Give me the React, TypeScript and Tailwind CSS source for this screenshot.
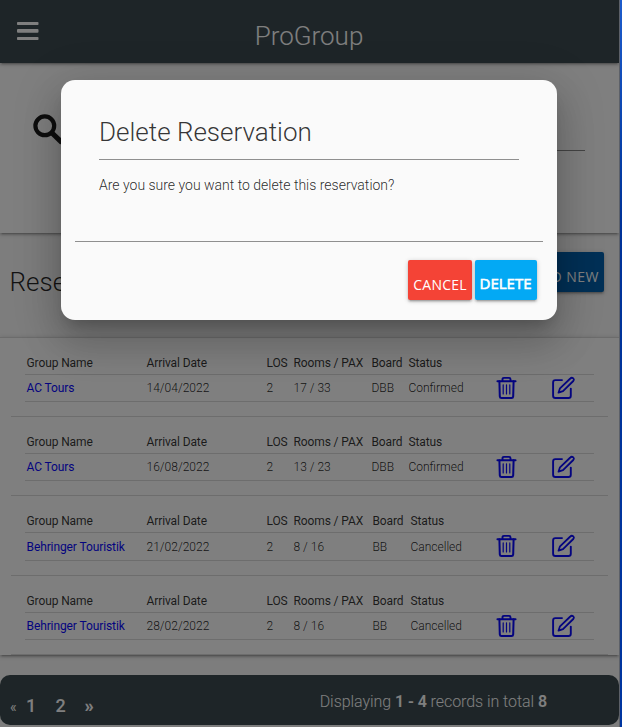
type Reservation = {
  name: string;
  date: string;
  los: string;
  rooms: string;
  board: string;
  status: string;
  cols: string;
  rowHeight: string;
};

const wide = "grid-cols-[120px_120px_27px_78px_37px_86.5px_1fr]";
const narrow = "grid-cols-[120px_120px_27px_79px_38px_84.5px_1fr]";

const reservations: Reservation[] = [
  { name: "AC Tours", date: "14/04/2022", los: "2", rooms: "17 / 33", board: "DBB", status: "Confirmed", cols: wide, rowHeight: "h-[27px]" },
  { name: "AC Tours", date: "16/08/2022", los: "2", rooms: "13 / 23", board: "DBB", status: "Confirmed", cols: wide, rowHeight: "h-[27px]" },
  { name: "Behringer Touristik", date: "21/02/2022", los: "2", rooms: "8 / 16", board: "BB", status: "Cancelled", cols: narrow, rowHeight: "h-[28px]" },
  { name: "Behringer Touristik", date: "28/02/2022", los: "2", rooms: "8 / 16", board: "BB", status: "Cancelled", cols: narrow, rowHeight: "h-[27px]" },
];

const depth = "shadow-[0_2px_2px_0_rgba(0,0,0,0.14),0_3px_1px_-2px_rgba(0,0,0,0.12),0_1px_5px_0_rgba(0,0,0,0.2)]";

function MenuIcon() {
  return (
    <svg className="mt-[19px] ml-[16px]" width="24" height="24" viewBox="0 0 24 24" fill="currentColor">
      <rect x="1" y="3" width="21.5" height="3" rx="0.8" />
      <rect x="1" y="10.1" width="21.5" height="3.6" rx="1" />
      <rect x="1" y="18" width="21.5" height="3" rx="0.8" />
    </svg>
  );
}

function SearchIcon() {
  return (
    <svg className="mt-[46px]" width="42" height="42" viewBox="0 0 42 42" fill="none" stroke="#1c1c1c">
      <circle cx="16.8" cy="16.8" r="9.4" strokeWidth="4.2" />
      <path d="M23.5 23.5 34 33.6" strokeWidth="5.2" />
    </svg>
  );
}

function TrashIcon() {
  return (
    <svg width="24" height="24" viewBox="0 0 24 24" fill="none" stroke="currentColor" strokeLinecap="round" strokeLinejoin="round">
      <path d="M2.4 5.2H20.6" strokeWidth="1.9" />
      <path d="M4.4 5.2 4.8 20.4Q4.9 22 6.5 22H16.5Q18.1 22 18.2 20.4L18.6 5.2" strokeWidth="2" />
      <path d="M7.5 5V3.3Q7.5 1.9 8.9 1.9H14.1Q15.5 1.9 15.5 3.3V5" strokeWidth="1.9" />
      <path d="M8.2 8.8V18M11.5 8.8V18M14.8 8.8V18" strokeWidth="1.2" />
    </svg>
  );
}

function EditIcon() {
  return (
    <svg width="24" height="24" viewBox="0 0 24 24" fill="none" stroke="currentColor" strokeLinecap="round" strokeLinejoin="round">
      <path d="M11 4.1H4.4Q2.1 4.1 2.1 6.4V19.7Q2.1 22 4.4 22H17.5Q19.8 22 19.8 19.7V12.6" strokeWidth="1.9" />
      <path d="M19.3 2.5Q20.5 1.3 22 2.1Q23.6 3.3 22.3 5L12 15.2 7.5 16.7 9 12.3Z" strokeWidth="1.8" />
    </svg>
  );
}

function Entry({ r }: { r: Reservation }) {
  return (
    <li className="border-b border-[#dadada] px-[14px] py-[14px]">
      <div className={`grid h-[23px] items-center border-b border-[#dadada] pl-[1.5px] text-[12px] tracking-[-0.11px] whitespace-nowrap text-black/80 ${r.cols}`}>
        <span>Group Name</span>
        <span>Arrival Date</span>
        <span>LOS</span>
        <span>Rooms / PAX</span>
        <span>Board</span>
        <span>Status</span>
      </div>
      <div className={`grid items-center border-b border-[#dadada] pl-[1.5px] text-[12px] font-light whitespace-nowrap text-black/85 ${r.cols} ${r.rowHeight}`}>
        <a className="font-normal tracking-[-0.1px] text-[#0808ff]">{r.name}</a>
        <span>{r.date}</span>
        <span>{r.los}</span>
        <span>{r.rooms}</span>
        <span>{r.board}</span>
        <span>{r.status}</span>
        <span className="-mt-px flex gap-8 text-[#0808ff]">
          <TrashIcon />
          <EditIcon />
        </span>
      </div>
    </li>
  );
}

export default function App() {
  return (
    <div className="relative flex h-[727px] w-[622px] overflow-hidden bg-[#fafafa] font-[Roboto,sans-serif] text-black">
      <div className="flex w-[619px] flex-col">
        <header className={`relative grid h-[63px] shrink-0 grid-cols-[1fr_auto_1fr] bg-[#3c4b50] text-white ${depth}`}>
          <MenuIcon />
          <h1 className="mt-[17px] -ml-px text-[26px] leading-[38px] font-light">ProGroup</h1>
          <span />
        </header>

        <section className={`flex h-[170px] shrink-0 justify-between bg-white pr-[34px] pl-[28px] ${depth}`}>
          <SearchIcon />
          <div className="mt-[87px] h-px w-[480px] bg-[#8a8a8a]" />
        </section>

        <section className="flex h-[104px] shrink-0 justify-between pr-[15px] pl-[9.5px]">
          <h2 className="mt-[30px] text-[26px] leading-[38px] font-light text-black/85">Reservations</h2>
          <button className={`mt-[19px] h-[40px] w-[92px] rounded-[2px] bg-[#0260ad] pt-[8px] pr-[5px] text-right font-['Open_Sans',sans-serif] text-[14px] tracking-[0.5px] whitespace-nowrap text-white ${depth}`}>
            ADD NEW
          </button>
        </section>

        <ul className={`shrink-0 border-t border-[#d8d8d8] bg-white px-[11px] ${depth}`}>
          {reservations.map((r) => (
            <Entry key={r.date} r={r} />
          ))}
        </ul>

        <footer className="mt-[20px] flex h-[50px] shrink-0 justify-between rounded-[10px] bg-[#3c4b50] pr-[72px] pl-[10px] text-white">
          <nav className="flex items-baseline pt-[17px] text-[18px] font-medium">
            <span className="w-[16px] text-[14px] font-normal">«</span>
            <span className="w-[29.5px]">1</span>
            <span className="w-[29px]">2</span>
            <span className="text-[18px] font-black">»</span>
          </nav>
          <p className="pt-[15px] text-[16px] leading-[24px] font-light tracking-[-0.06px] whitespace-nowrap">
            Displaying <b className="font-semibold">1 - 4</b> records in total <b className="font-semibold">8</b>
          </p>
        </footer>
      </div>

      <div className="absolute inset-y-0 left-0 w-[620px] bg-black/50" />
      <div className="absolute inset-y-0 right-0 w-[3px] border-l border-[#5c6068] bg-linear-to-b from-[#1d5ccc] via-[#003399] via-30% to-[#0035a0]" />

      <div
        role="dialog"
        className="absolute top-[80px] left-[61px] flex h-[240px] w-[496px] flex-col rounded-[14px] bg-[#fafafa] shadow-[0_24px_38px_3px_rgba(0,0,0,0.14),0_9px_46px_8px_rgba(0,0,0,0.12),0_11px_15px_-7px_rgba(0,0,0,0.2)]"
      >
        <div className="h-[161px] px-[38px] pt-[33px]">
          <h3 className="text-[26px] leading-[38px] font-light text-black/80">Delete Reservation</h3>
          <div className="mt-[8px] h-px bg-[#8f8f8f]" />
          <p className="mt-[15px] text-[14px] leading-[21px] font-light text-black/85">Are you sure you want to delete this reservation?</p>
        </div>
        <div className="mx-[14px] h-px bg-[#8f8f8f]" />
        <div className="mt-[18px] flex justify-end gap-[3px] pr-[20px] font-['Open_Sans',sans-serif] text-[14px] text-white">
          <button className={`h-[40px] w-[64px] rounded-[2px] bg-[#f44336] pt-[9px] font-medium tracking-[0.2px] ${depth}`}>CANCEL</button>
          <button className={`h-[40px] w-[62px] rounded-[2px] bg-[#03a9f4] pt-[7px] pr-px text-[15px] font-medium [-webkit-text-stroke:0.6px_white] ${depth}`}>DELETE</button>
        </div>
      </div>
    </div>
  );
}
